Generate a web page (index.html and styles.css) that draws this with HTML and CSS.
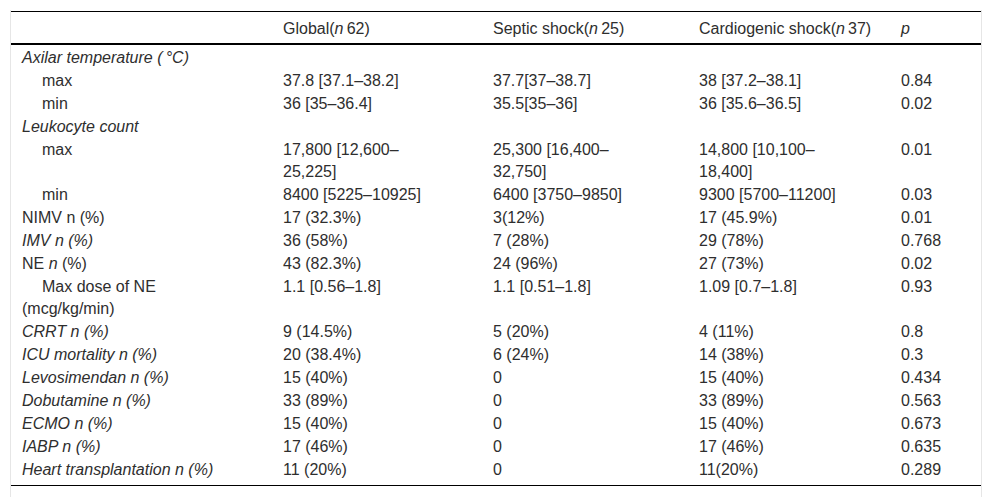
FILE: index.html
```html
<!DOCTYPE html>
<html lang="en">
<head>
<meta charset="utf-8">
<title>Table</title>
<link rel="stylesheet" href="styles.css">
</head>
<body>
<div class="table-wrap">
  <table class="data">
    <colgroup>
      <col class="c1"><col class="c2"><col class="c3"><col class="c4"><col class="c5">
    </colgroup>
    <thead>
      <tr>
        <th></th>
        <th>Global(<i>n</i>&thinsp;62)</th>
        <th>Septic shock(<i>n</i>&thinsp;25)</th>
        <th>Cardiogenic shock(<i>n</i>&thinsp;37)</th>
        <th><i>p</i></th>
      </tr>
    </thead>
    <tbody>
      <tr><td><i>Axilar temperature (&thinsp;°C)</i></td><td></td><td></td><td></td><td></td></tr>
      <tr><td class="sub">max</td><td>37.8 [37.1–38.2]</td><td>37.7[37–38.7]</td><td>38 [37.2–38.1]</td><td>0.84</td></tr>
      <tr><td class="sub">min</td><td>36 [35–36.4]</td><td>35.5[35–36]</td><td>36 [35.6–36.5]</td><td>0.02</td></tr>
      <tr><td><i>Leukocyte count</i></td><td></td><td></td><td></td><td></td></tr>
      <tr><td class="sub">max</td><td>17,800 [12,600–25,225]</td><td>25,300 [16,400–32,750]</td><td>14,800 [10,100–18,400]</td><td>0.01</td></tr>
      <tr><td class="sub">min</td><td>8400 [5225–10925]</td><td>6400 [3750–9850]</td><td>9300 [5700–11200]</td><td>0.03</td></tr>
      <tr><td>NIMV n (%)</td><td>17 (32.3%)</td><td>3(12%)</td><td>17 (45.9%)</td><td>0.01</td></tr>
      <tr><td><i>IMV n (%)</i></td><td>36 (58%)</td><td>7 (28%)</td><td>29 (78%)</td><td>0.768</td></tr>
      <tr><td>NE <i>n</i> (%)</td><td>43 (82.3%)</td><td>24 (96%)</td><td>27 (73%)</td><td>0.02</td></tr>
      <tr><td class="sub">Max dose of NE (mcg/kg/min)</td><td>1.1 [0.56–1.8]</td><td>1.1 [0.51–1.8]</td><td>1.09 [0.7–1.8]</td><td>0.93</td></tr>
      <tr><td><i>CRRT n (%)</i></td><td>9 (14.5%)</td><td>5 (20%)</td><td>4 (11%)</td><td>0.8</td></tr>
      <tr><td><i>ICU mortality n (%)</i></td><td>20 (38.4%)</td><td>6 (24%)</td><td>14 (38%)</td><td>0.3</td></tr>
      <tr><td><i>Levosimendan n (%)</i></td><td>15 (40%)</td><td>0</td><td>15 (40%)</td><td>0.434</td></tr>
      <tr><td><i>Dobutamine n (%)</i></td><td>33 (89%)</td><td>0</td><td>33 (89%)</td><td>0.563</td></tr>
      <tr><td><i>ECMO n (%)</i></td><td>15 (40%)</td><td>0</td><td>15 (40%)</td><td>0.673</td></tr>
      <tr><td><i>IABP n (%)</i></td><td>17 (46%)</td><td>0</td><td>17 (46%)</td><td>0.635</td></tr>
      <tr><td><i>Heart transplantation n (%)</i></td><td>11 (20%)</td><td>0</td><td>11(20%)</td><td>0.289</td></tr>
    </tbody>
  </table>
</div>
</body>
</html>
```

FILE: styles.css
```css
body {
  margin: 0;
  background: #ffffff;
  font-family: "Liberation Sans", Arial, sans-serif;
  font-size: 16px;
  color: #2e2e2e;
}

.table-wrap {
  margin: 10px 0 0 10px;
  width: 970px;
  padding: 1px 0 40px;
  border-left: 1px solid #e6e6e6;
  border-right: 1px solid #e6e6e6;
}

.data {
  width: 970px;
  table-layout: fixed;
  border-collapse: collapse;
  border-top: 1px solid #000;
  border-bottom: 1px solid #000;
}

.c1 { width: 261px; }
.c2 { width: 210px; }
.c3 { width: 206px; }
.c4 { width: 202px; }
.c5 { width: 91px; }

.data th,
.data td {
  text-align: left;
  vertical-align: top;
  font-weight: normal;
  line-height: 22px;
  padding: 1px 40px 0 11px;
}

.data thead th {
  padding-top: 6px;
  padding-bottom: 3px;
  border-bottom: 2px solid #000;
  white-space: nowrap;
}

.data td:last-child,
.data th:last-child {
  padding-right: 0;
}

.data tbody tr:first-child td {
  padding-top: 2px;
}

.data tbody tr:last-child td {
  padding-bottom: 4px;
}

.data td.sub {
  text-indent: 20px;
}
```
